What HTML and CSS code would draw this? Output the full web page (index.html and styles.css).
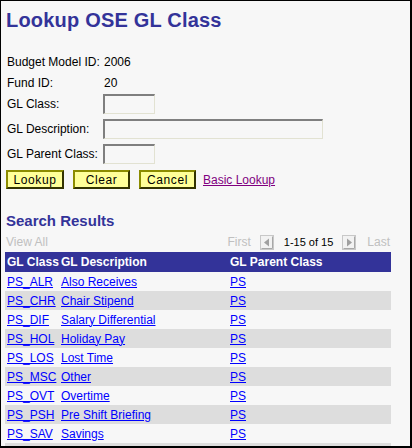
FILE: index.html
```html
<!DOCTYPE html>
<html lang="en">
<head>
    <meta charset="UTF-8">
    <title>Lookup OSE GL Class</title>
    <link rel="stylesheet" href="styles.css">
</head>
<body>
<div class="page">
    <h1 class="title">Lookup OSE GL Class</h1>
    <div class="form">
        <div class="form-row info">
            <span class="label">Budget Model ID:</span>
            <span class="value">2006</span>
        </div>
        <div class="form-row info fund">
            <span class="label">Fund ID:</span>
            <span class="value">20</span>
        </div>
        <div class="form-row class">
            <span class="label">GL Class:</span>
            <input class="field short" type="text">
        </div>
        <div class="form-row">
            <span class="label">GL Description:</span>
            <input class="field long" type="text">
        </div>
        <div class="form-row">
            <span class="label">GL Parent Class:</span>
            <input class="field short" type="text">
        </div>
        <div class="buttons">
            <button class="btn btn-lookup">Lookup</button>
            <button class="btn">Clear</button>
            <button class="btn">Cancel</button>
            <a class="basic" href="#">Basic Lookup</a>
        </div>
    </div>

    <h2 class="results-title">Search Results</h2>
    <div class="nav">
        <span class="view-all">View All</span>
        <div class="pager">
            <span class="dim">First</span>
            <svg class="arrow" width="14" height="15" viewBox="0 0 14 15">
                <rect x="0.5" y="0.5" width="13" height="14" fill="#f2f2f2" stroke="#c8c8c8"/>
                <path d="M1.5 13.5 H12.5 V1.5" fill="none" stroke="#a8a8a8"/>
                <path d="M9 3.5 L4 7.5 L9 11.5 Z" fill="#a0a0a0"/>
            </svg>
            <span class="count">1-15 of 15</span>
            <svg class="arrow" width="14" height="15" viewBox="0 0 14 15">
                <rect x="0.5" y="0.5" width="13" height="14" fill="#f2f2f2" stroke="#c8c8c8"/>
                <path d="M1.5 13.5 H12.5 V1.5" fill="none" stroke="#a8a8a8"/>
                <path d="M5 3.5 L10 7.5 L5 11.5 Z" fill="#a0a0a0"/>
            </svg>
            <span class="dim last">Last</span>
        </div>
    </div>
    <table class="grid">
        <thead>
        <tr>
            <th class="c1">GL Class</th>
            <th class="c2">GL Description</th>
            <th class="c3">GL Parent Class</th>
        </tr>
        </thead>
        <tbody>
        <tr><td><a href="#">PS_ALR</a></td><td><a href="#">Also Receives</a></td><td><a href="#">PS</a></td></tr>
        <tr><td><a href="#">PS_CHR</a></td><td><a href="#">Chair Stipend</a></td><td><a href="#">PS</a></td></tr>
        <tr><td><a href="#">PS_DIF</a></td><td><a href="#">Salary Differential</a></td><td><a href="#">PS</a></td></tr>
        <tr><td><a href="#">PS_HOL</a></td><td><a href="#">Holiday Pay</a></td><td><a href="#">PS</a></td></tr>
        <tr><td><a href="#">PS_LOS</a></td><td><a href="#">Lost Time</a></td><td><a href="#">PS</a></td></tr>
        <tr><td><a href="#">PS_MSC</a></td><td><a href="#">Other</a></td><td><a href="#">PS</a></td></tr>
        <tr><td><a href="#">PS_OVT</a></td><td><a href="#">Overtime</a></td><td><a href="#">PS</a></td></tr>
        <tr><td><a href="#">PS_PSH</a></td><td><a href="#">Pre Shift Briefing</a></td><td><a href="#">PS</a></td></tr>
        <tr><td><a href="#">PS_SAV</a></td><td><a href="#">Savings</a></td><td><a href="#">PS</a></td></tr>
        <tr><td></td><td></td><td></td></tr>
        </tbody>
    </table>
</div>
</body>
</html>
```

FILE: styles.css
```css
*{
    margin: 0;
    padding: 0;
}
body{
    font-family: "Liberation Sans", Arial, sans-serif;
    font-size: 12px;
    color: #000;
    background: #f7f7f7;
}
.page{
    width: 412px;
    height: 448px;
    box-sizing: border-box;
    border-style: solid;
    border-color: #000;
    border-width: 1px 2px 2px 1px;
    background: #f7f7f7;
    padding: 7px 0 0 4px;
    overflow: hidden;
}
.title{
    font-size: 20px;
    line-height: 24px;
    font-weight: bold;
    color: #333399;
    padding-left: 1px;
    letter-spacing: 0.2px;
}
.form{
    margin-top: 23px;
}
.form-row{
    display: flex;
    align-items: center;
    height: 20px;
    margin-top: 5px;
}
.form-row.info{
    height: 14px;
    margin-top: 0;
}
.form-row.fund{
    margin-top: 7px;
}
.form-row.class{
    margin-top: 4px;
}
.label{
    width: 96px;
    padding-left: 2px;
    flex: none;
}
.value{
    padding-left: 1px;
}
.field{
    height: 20px;
    box-sizing: border-box;
    background: #f7f7f7;
    border-style: solid;
    border-width: 2px 1px 1px 2px;
    border-color: #7f7f7f #e2e2d2 #e2e2d2 #7f7f7f;
    font: inherit;
    outline: none;
}
.field.short{
    width: 52px;
}
.field.long{
    width: 220px;
}
.buttons{
    display: flex;
    align-items: center;
    margin-top: 6px;
    padding-left: 1px;
    height: 19px;
}
.btn{
    width: 57px;
    height: 19px;
    margin-right: 9px;
    background: #ffff99;
    border-style: solid;
    border-width: 2px;
    border-color: #8c8c00 #333300 #333300 #8c8c00;
    font-family: "Liberation Sans", Arial, sans-serif;
    font-size: 12px;
    letter-spacing: 0.6px;
    color: #000;
}
.btn-lookup{
    width: 58px;
    margin-right: 9px;
}
.basic{
    margin-left: -2px;
    color: #800080;
}
.results-title{
    margin-top: 23px;
    font-size: 15px;
    line-height: 18px;
    font-weight: bold;
    color: #333399;
    padding-left: 1px;
}
.nav{
    width: 386px;
    height: 18px;
    margin-top: 3px;
    display: flex;
    align-items: center;
    justify-content: space-between;
}
.view-all{
    color: #c0c0c0;
    padding-left: 1px;
}
.pager{
    display: flex;
    align-items: center;
    padding-right: 1px;
}
.dim{
    color: #c0c0c0;
}
.arrow{
    margin: 0 10px 0 9px;
    display: block;
}
.arrow + .dim{
    margin-left: 1px;
}
.count{
    font-size: 11px;
}
.grid{
    margin-top: 1px;
    width: 386px;
    border-collapse: collapse;
    table-layout: fixed;
}
.grid th{
    height: 20px;
    background: #333399;
    color: #fff;
    font-weight: bold;
    text-align: left;
    padding: 0 0 0 2px;
}
.grid .c1{
    width: 52px;
}
.grid .c2{
    width: 167px;
}
.grid td{
    height: 19px;
    padding: 0 0 0 2px;
    white-space: nowrap;
}
.grid tbody tr:nth-child(even) td{
    background: #dddddd;
}
.grid a{
    color: #0000ff;
}
```
